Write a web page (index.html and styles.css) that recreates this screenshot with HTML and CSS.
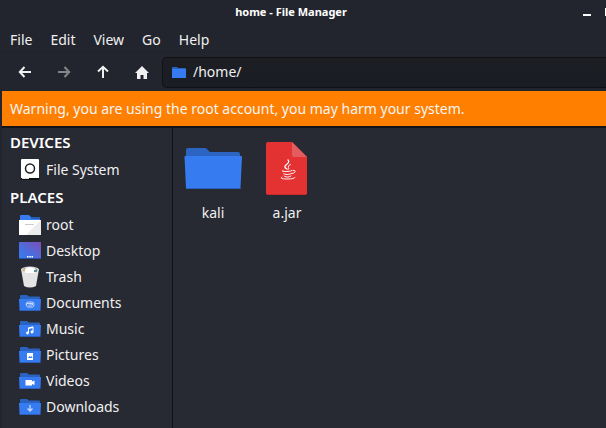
FILE: index.html
```
<!DOCTYPE html>
<html lang="en">
<head>
<meta charset="utf-8">
<title>home - File Manager</title>
<link rel="stylesheet" href="styles.css">
</head>
<body>
<svg class="defs" aria-hidden="true">
  <symbol id="folder" viewBox="0 0 22 18">
    <path d="M1 2q0-1 1-1h6l2 1.500h10q1 0 1 1V10H1z" fill="#2a62bf"/>
    <path d="M0 5h22l-.5 11H.5z" fill="#367bf0"/>
    <path d="M.5 16h21v1H.5z" fill="#2b62c0"/>
  </symbol>
</svg>
<div class="window">
  <header class="titlebar">
    <h1 class="title">home - File Manager</h1>
    <div class="controls">
      <button class="control" aria-label="Minimize"><svg width="8" height="8" viewBox="0 0 8 8"><path d="M0 6h8v2H0z" fill="#fff"/></svg></button>
      <button class="control" aria-label="Maximize"><svg width="8" height="8" viewBox="0 0 8 8"><path d="M1 1h6v6H1z" fill="none" stroke="#fff" stroke-width="2"/></svg></button>
    </div>
  </header>
  <nav class="menubar">
    <button class="menu">File</button>
    <button class="menu">Edit</button>
    <button class="menu">View</button>
    <button class="menu">Go</button>
    <button class="menu">Help</button>
  </nav>
  <div class="toolbar">
    <button class="tool" aria-label="Back"><svg width="16" height="16" viewBox="0 0 16 16"><path d="M14 8H3M7.500 3L2.800 8l4.700 5" fill="none" stroke="#f0f0f0" stroke-width="2"/></svg></button>
    <button class="tool" aria-label="Forward" disabled><svg width="16" height="16" viewBox="0 0 16 16"><path d="M2 8h11M8.500 3l4.700 5-4.700 5" fill="none" stroke="#85868a" stroke-width="2"/></svg></button>
    <button class="tool" aria-label="Up"><svg width="16" height="16" viewBox="0 0 16 16"><path d="M8 14V3M3 7.500L8 2.800l5 4.700" fill="none" stroke="#f0f0f0" stroke-width="2"/></svg></button>
    <button class="tool" aria-label="Home"><svg width="16" height="16" viewBox="0 0 16 16"><path d="M8 2l7 7h-2v6H9.500v-4h-3v4H3V9H1z" fill="#f0f0f0"/></svg></button>
    <label class="location">
      <svg width="14" height="11" viewBox="0 0 14 11"><path d="M0 1q0-1 1-1h4l1 1h7q1 0 1 1v4H0z" fill="#2a62bf"/><path d="M0 2h14v9H0z" fill="#367bf0"/></svg>
      <input class="path" type="text" value="/home/" aria-label="Location">
    </label>
  </div>
  <p class="warning" role="alert">Warning, you are using the root account, you may harm your system.</p>
  <div class="content">
    <aside class="sidebar">
      <h2 class="group">DEVICES</h2>
      <a class="place" href="#"><svg width="22" height="22" viewBox="0 0 22 22"><rect x="2" y="0" width="18" height="21" rx="1" fill="#fff"/><path d="M2 19h18v2H2z" fill="#111"/><path d="M3 19h7v1H3z" fill="#ddd"/><circle cx="11" cy="9.500" r="4.500" fill="none" stroke="#1c1d22" stroke-width="1.500"/></svg>File System</a>
      <h2 class="group">PLACES</h2>
      <a class="place" href="#"><svg width="22" height="22" viewBox="0 0 22 22"><path d="M1 2q0-1 1-1h8l2 2h8q1 0 1 1v3H1z" fill="#367bf0"/><path d="M12 3h9v2h-9z" fill="#285db5"/><path d="M0 6h22v15H0z" fill="#fff"/><path d="M22 6v15H7z" fill="#ececec"/><path d="M6 10h9v1H6z" fill="#ccc"/></svg>root</a>
      <a class="place" href="#"><svg width="22" height="22" viewBox="0 0 22 22"><defs><linearGradient id="desk" x1="0" y1="1" x2="1" y2="0"><stop stop-color="#367bf0"/><stop offset=".35" stop-color="#4670e3"/><stop offset="1" stop-color="#7d4fb5"/></linearGradient></defs><path d="M0 2h22v17H0z" fill="url(#desk)"/><path d="M0 18h22v1H0z" fill="#294fae"/><path d="M8 16h1.500v1.500H8zM10.300 16h1.500v1.500h-1.500zM12.500 16H14v1.500h-1.500z" fill="#fff"/></svg>Desktop</a>
      <a class="place" href="#"><svg width="22" height="22" viewBox="0 0 22 22"><path d="M2 3l3 17q6 3 12 0l3-17z" fill="#e4e4e4"/><ellipse cx="11" cy="3.500" rx="9" ry="3" fill="#d8d8d8"/><ellipse cx="11" cy="4" rx="7.500" ry="2.500" fill="#9a9994"/><path d="M5 5l2-3 4-1 4 1 3 3-3 2H7z" fill="#fff"/><path d="M4 3h2v2H4z" fill="#dfb56c"/><path d="M15 4h3v2h-3z" fill="#50958e"/></svg>Trash</a>
      <a class="place" href="#"><svg width="22" height="18" viewBox="0 0 22 18"><use href="#folder"/><path d="M13.500 9.500H9q-1.700 0-1.700 1.500T9 13h4.500q1.500 0 1.500-2.700 0-2.300-2.500-2.300h-3Q7 8 7 10.500M13.500 9.500v1.500H9.500" fill="none" stroke="#c4d8fc"/></svg>Documents</a>
      <a class="place" href="#"><svg width="22" height="18" viewBox="0 0 22 18"><use href="#folder"/><path d="M9.500 13V8l4.500-1v5" fill="none" stroke="#fff"/><path d="M9.500 7.500L14 6.500v1.500l-4.500 1z" fill="#fff"/><circle cx="8.500" cy="13" r="1.400" fill="#fff"/><circle cx="13" cy="12" r="1.400" fill="#fff"/></svg>Music</a>
      <a class="place" href="#"><svg width="22" height="18" viewBox="0 0 22 18"><use href="#folder"/><path d="M8 7h6v7H8z" fill="#fff"/><path d="M9 12l1.500-2 1 1 1-1 1 2z" fill="#367bf0"/></svg>Pictures</a>
      <a class="place" href="#"><svg width="22" height="18" viewBox="0 0 22 18"><use href="#folder"/><path d="M6.500 8h6.500v1.500l2.500-1v4.500l-2.500-1v1.500H6.500z" fill="#fff"/></svg>Videos</a>
      <a class="place" href="#"><svg width="22" height="18" viewBox="0 0 22 18"><use href="#folder"/><path d="M11 7v6M8.500 10.500l2.500 2.500 2.500-2.500" fill="none" stroke="#c4d8fc" stroke-width="1.300"/></svg>Downloads</a>
    </aside>
    <main class="files">
      <a class="file" href="#"><svg width="60" height="60" viewBox="0 0 60 60"><path d="M3 12q0-2 2-2h17q1 0 2 1l3 3h28q2 0 2 2v8H3z" fill="#2c64c1"/><path d="M2 18h56q1 0 1 1l-1.500 31q0 1-1 1H4q-1 0-1-1L1.500 19q0-1 .5-1z" fill="#367bf0"/><path d="M3.500 50.500h54" stroke="#2861bf"/></svg>kali</a>
      <a class="file" href="#"><svg width="60" height="60" viewBox="0 0 60 60"><path d="M11 4h24l15 15v36q0 2-2 2H11q-2 0-2-2V6q0-2 2-2z" fill="#e43132"/><path d="M35 4l15 15H37q-2 0-2-2z" fill="#e35d60"/><path d="M10 56.500h39" stroke="#c7292c"/><g fill="none" stroke="#fff" stroke-width=".9" stroke-linecap="round"><path d="M31 22q2 2-1.500 4.500t.5 4.500" stroke-width="1.300"/><path d="M33.500 26.500q-3.500 1.500-2 3t-.5 2M26 32.500q-3 1 4 1 4 0 5-1M36 32.500q3-.5 2 1.500-1 1.500-3 1.500M26.500 35.500q0 1 3.500 1 3 0 4.500-1M27 38q0 1 3.500 1 2.500 0 3.500-1M25 39q-3.500 2 5 2 8 0 8-1.500"/></g></svg>a.jar</a>
    </main>
  </div>
</div>
</body>
</html>
```
FILE: styles.css
```
* { box-sizing: border-box; }

body {
  margin: 0;
  background: #22242d;
  color: #f0f0f0;
  font: 14px/18px "Noto Sans", sans-serif;
  overflow: hidden;
}

button, input {
  margin: 0;
  padding: 0;
  border: 0;
  background: none;
  color: inherit;
  font: inherit;
}

a { color: inherit; text-decoration: none; }
svg { flex: none; display: block; }
.defs { position: absolute; width: 0; height: 0; }

.window {
  display: flex;
  flex-direction: column;
  min-height: 100vh;
  padding-left: 2px;
  background: #23252e;
}

.titlebar {
  display: grid;
  grid-template-columns: 1fr auto 1fr;
  align-items: center;
  height: 24px;
}

.title {
  grid-column: 2;
  margin: 0 0 0 -26px;
  color: #fff;
  font-size: 11px;
  font-weight: 700;
}

.controls {
  display: flex;
  justify-content: flex-end;
  gap: 14px;
  margin-right: -7px;
}

.control { display: block; }

.menubar {
  display: flex;
  gap: 18px;
  height: 29px;
  padding: 7px 8px 3px;
  border-bottom: 1px solid #20222a;
}

.toolbar {
  display: flex;
  align-items: center;
  height: 38px;
  padding-left: 3px;
}

.tool {
  display: flex;
  align-items: center;
  justify-content: center;
  width: 39px;
  height: 32px;
}

.location {
  display: flex;
  flex: 1;
  align-items: center;
  gap: 7px;
  height: 31px;
  margin-left: 1px;
  padding-left: 9px;
  border: 1px solid #101116;
  border-right: 0;
  border-radius: 5px 0 0 5px;
  background: linear-gradient(#1c1e22, #1a1d25);
}

.path { flex: 1; min-width: 0; outline: 0; }

.warning {
  margin: 0;
  padding: 9px 8px 8px;
  background: #ff7f00;
  color: #f5f5f5;
}

.content {
  display: flex;
  flex: 1;
  border-top: 2px solid #14151a;
  background: #272933;
}

.sidebar {
  flex: none;
  width: 171px;
  border-right: 1px solid #101116;
}

.group {
  margin: 0;
  padding: 0 8px;
  color: #fff;
  font-size: 15px;
  font-weight: 600;
  line-height: 29px;
}

.place {
  display: flex;
  align-items: center;
  gap: 5px;
  height: 26px;
  padding-left: 17px;
}

.files {
  display: flex;
  flex: 1;
  flex-wrap: wrap;
  align-content: flex-start;
  gap: 14px;
  padding: 10px;
}

.file {
  display: flex;
  flex-direction: column;
  align-items: center;
  gap: 6px;
  width: 60px;
}
```
